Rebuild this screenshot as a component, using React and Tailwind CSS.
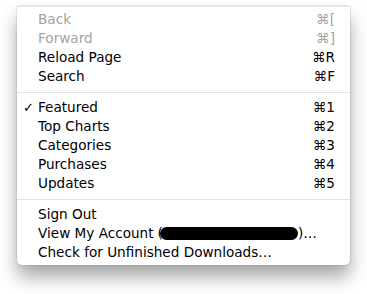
const groups = [
  [
    { label: "Back", key: "⌘[", disabled: true },
    { label: "Forward", key: "⌘]", disabled: true },
    { label: "Reload Page", key: "⌘R" },
    { label: "Search", key: "⌘F" },
  ],
  [
    { label: "Featured", key: "⌘1", checked: true },
    { label: "Top Charts", key: "⌘2" },
    { label: "Categories", key: "⌘3" },
    { label: "Purchases", key: "⌘4" },
    { label: "Updates", key: "⌘5" },
  ],
  [
    { label: "Sign Out" },
    { label: "View My Account", account: true },
    { label: "Check for Unfinished Downloads…" },
  ],
];

function MenuRow({ item }) {
  return (
    <div
      className={`relative flex h-[19px] items-center pl-[21px] pr-[15px] ${
        item.disabled ? "text-[#a3a3a3]" : "text-black"
      }`}
    >
      {item.checked && <span className="absolute left-[6px] text-[13px]">✓</span>}
      <span className="flex items-center">
        {item.label}
        {item.account && (
          <>
            <span className="ml-[4px]">(</span>
            <span className="-ml-[3px] inline-block h-[13px] w-[138px] rounded-full bg-black" />
            <span>)…</span>
          </>
        )}
      </span>
      {item.key && <span className="ml-auto">{item.key}</span>}
    </div>
  );
}

export default function App() {
  return (
    <div className="h-[294px] w-[367px] bg-white pl-[17px] pt-[6px] font-['DejaVu_Sans',sans-serif] text-[13.6px]">
      <div className="w-[333px] rounded-b-[5px] border-t border-[#e4e4e4] bg-white py-[3px] shadow-[0_12px_18px_rgba(0,0,0,0.35),0_0_2px_rgba(0,0,0,0.25)]">
        {groups.map((group, gi) => (
          <div key={gi}>
            {gi > 0 && (
              <div className="flex h-[12px] items-center">
                <div className="h-px w-full bg-[#e2e2e2]" />
              </div>
            )}
            {group.map((item) => (
              <MenuRow key={item.label} item={item} />
            ))}
          </div>
        ))}
      </div>
    </div>
  );
}
